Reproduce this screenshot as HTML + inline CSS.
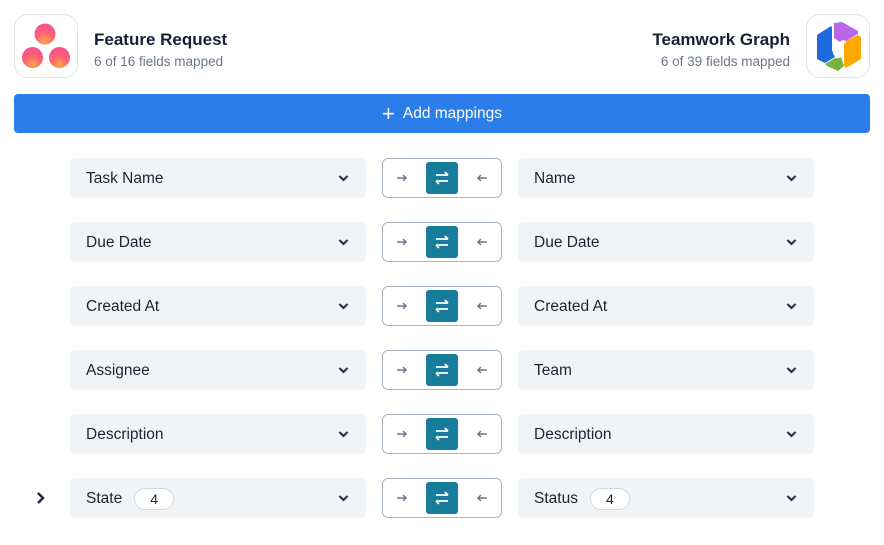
<!DOCTYPE html>
<html><head><meta charset="utf-8"><style>
*{box-sizing:border-box;margin:0;padding:0}
body{width:884px;height:545px;background:#fff;font-family:"Liberation Sans",sans-serif;position:relative;overflow:hidden;color:#1d2330}
.logo{position:absolute;top:14px;width:64px;height:64px;border:1px solid #dfe3ea;border-radius:14px;background:#fff;overflow:hidden}
.logo svg{position:absolute;left:-1px;top:-1px}
.t{position:absolute;font-size:17px;font-weight:bold;color:#172033;top:30px}
.s{position:absolute;font-size:13.5px;color:#6b778c;top:54px}
.btn{position:absolute;left:14px;top:94px;width:856px;height:39px;background:#2b7de9;border-radius:4px;color:#fff;font-size:15.5px;display:flex;align-items:center;justify-content:center}
.sel{position:absolute;width:296px;height:40px;background:#f1f4f7;border-radius:6px;font-size:15.5px;color:#1d2330;display:flex;align-items:center;padding-left:16px;padding-top:1px}
.sel svg{position:absolute;right:17px;top:16px}
.tg{position:absolute;left:382px;width:120px;height:40px;border:1px solid #a9b4c2;border-radius:6px}
.tg .a{position:absolute;left:43px;top:3px;width:32px;height:32px;background:#187c9b;border-radius:3px}
.tg svg{position:absolute}
.pill{display:inline-block;margin-left:12px;border:1px solid #d5dae2;border-radius:12px;width:40px;height:22px;font-size:14px;text-align:center;line-height:20px;background:#fff}
</style></head><body>
<div class="logo" style="left:14px">
<svg width="64" height="64" viewBox="0 0 64 64"><defs><radialGradient id="g" cx="50%" cy="85%" r="75%"><stop offset="0" stop-color="#ffa64a"/><stop offset="0.55" stop-color="#fb6374"/><stop offset="1" stop-color="#f6548a"/></radialGradient></defs>
<circle cx="31" cy="20" r="10.5" fill="url(#g)"/><circle cx="18.5" cy="43.5" r="10.5" fill="url(#g)"/><circle cx="45.5" cy="43.5" r="10.5" fill="url(#g)"/></svg></div>
<div class="t" style="left:94px">Feature Request</div>
<div class="s" style="left:94px">6 of 16 fields mapped</div>
<div class="t" style="right:94px">Teamwork Graph</div>
<div class="s" style="right:94px">6 of 39 fields mapped</div>
<div class="logo" style="left:806px">
<svg width="64" height="64" viewBox="0 0 64 64" stroke-linejoin="round">
<path d="M28 9 L36 8 L52 17 L52 20 L40 27 Q36 25 34 28 L28 24 Z" fill="#b967e8"/>
<path d="M52 21 L55 23 L55 45 L40 54 L38 52 L38 30 Q40 28 40 27 Z" fill="#ffa800"/>
<path d="M38 52 L32 57 L21 52 L19 50 L29 44 Q32 45 35 43 Z" fill="#7ab33c"/>
<path d="M19 49 L11 45 L11 21 L25 12 L26 13 L26 36 Q27 40 29 43 Z" fill="#1e6bde"/>
</svg></div>
<div class="btn"><span style="font-size:22px;margin-right:8px;line-height:1">+</span>Add mappings</div>

<div id="rows"></div>
<script>
var L=["Task Name","Due Date","Created At","Assignee","Description","State"],R=["Name","Due Date","Created At","Team","Description","Status"];
var chev='<svg width="11" height="8" viewBox="0 0 11 8"><path d="M1.5 2 L5.5 6 L9.5 2" stroke="#1d2b45" stroke-width="2" fill="none"/></svg>';
var h='';
for(var i=0;i<6;i++){var y=158+i*64;var p=i==5?'<span class="pill">4</span>':'';
h+='<div class="sel" style="left:70px;top:'+y+'px">'+L[i]+p+chev+'</div>';
h+='<div class="sel" style="left:518px;top:'+y+'px">'+R[i]+p+chev+'</div>';
h+='<div class="tg" style="top:'+y+'px"><svg style="left:13px;top:14px" width="12" height="10" viewBox="0 0 12 10"><path d="M1 5H10M7 2L10 5L7 8" stroke="#6b778c" stroke-width="1.5" fill="none"/></svg><div class="a"><svg width="32" height="32" viewBox="0 0 32 32"><path d="M10 13H22M19 10L22 13M22 19H10M13 22L10 19" stroke="#fff" stroke-width="1.8" fill="none"/></svg></div><svg style="left:93px;top:14px" width="12" height="10" viewBox="0 0 12 10"><path d="M11 5H2M5 2L2 5L5 8" stroke="#6b778c" stroke-width="1.5" fill="none"/></svg></div>';}
h+='<svg style="position:absolute;left:36px;top:491px" width="10" height="14" viewBox="0 0 10 14"><path d="M2 2L7 7L2 12" stroke="#1d2b45" stroke-width="2.5" fill="none"/></svg>';
document.getElementById('rows').innerHTML=h;
</script>
</body></html>
